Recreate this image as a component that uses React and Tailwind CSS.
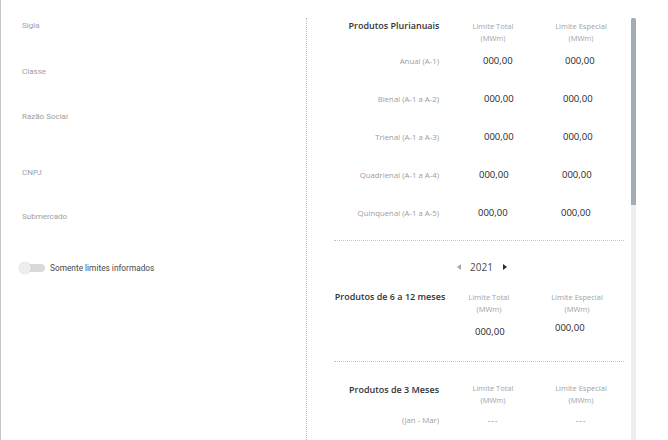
import React from "react";

const OS = "font-['Open_Sans',_'Noto_Sans',_sans-serif]";
const RB = "font-['Roboto',_'Liberation_Sans',_sans-serif]";

const rows = [
  { label: "Anual (A-1)", v1: "pl-[36px]", v2: "pl-[26px]" },
  { label: "Bienal (A-1 a A-2)", v1: "pl-[37px]", v2: "pl-[24px]" },
  { label: "Trienal (A-1 a A-3)", v1: "pl-[37px]", v2: "pl-[24px]" },
  { label: "Quadrienal (A-1 a A-4)", v1: "pl-[32px]", v2: "pl-[23px]" },
  { label: "Quinquenal (A-1 a A-5)", v1: "pl-[31px]", v2: "pl-[22px]" },
];

function Header({ title, titleClass = "" }) {
  return (
    <div className="flex h-[22px] items-start">
      <div className={`w-[113px] pl-[7px] flex justify-center ${titleClass}`}>
        <span className="whitespace-nowrap text-[9px] font-semibold leading-[12px] text-[#333333]">
          {title}
        </span>
      </div>
      <div className="w-[92px] flex flex-col items-center text-[7.5px] leading-[12px] text-[#a3a3a3]">
        <span>Limite Total</span>
        <span>(MWm)</span>
      </div>
      <div className="w-[84px] flex flex-col items-center text-[7.5px] leading-[12px] text-[#a3a3a3]">
        <span>Limite Especial</span>
        <span>(MWm)</span>
      </div>
    </div>
  );
}

export default function App() {
  return (
    <div className={`w-[668px] h-[440px] bg-white border-l border-[#c6c6c6] overflow-hidden`}>
      <div className="flex mt-[18px] h-[422px]">
        {/* Left column */}
        <div className={`w-[306px] shrink-0 border-r border-dotted border-[#b8b8b8] pl-[21px] pt-[2px] ${RB}`}>
          <div className="h-[46px] text-[8px] leading-[12px] text-[#a0a0a0]">Sigla</div>
          <div className="h-[45px] text-[8px] leading-[12px] text-[#a0a0a0]">Classe</div>
          <div className="h-[56px] text-[8px] leading-[12px] text-[#a0a0a0]">Razão Social</div>
          <div className="h-[44px] text-[8px] leading-[12px] text-[#a0a0a0]">CNPJ</div>
          <div className="h-[51px] text-[8px] leading-[12px] text-[#a0a0a0]">Submercado</div>
          <div className="flex items-center h-[12px] -ml-[3px]">
            <div className="relative w-[26px] h-[10px]">
              <div className="absolute left-[2px] right-0 top-[1px] h-[8px] rounded-full bg-[#dadada]" />
              <div className="absolute left-0 top-[-1px] w-[12px] h-[12px] rounded-full bg-[#eeeeee] shadow-[0_0_1px_rgba(0,0,0,0.25)]" />
            </div>
            <span className="ml-[5px] text-[8.3px] leading-[12px] font-normal text-[#4a4a4a]">
              Somente limites informados
            </span>
          </div>
        </div>

        {/* Right column */}
        <div className={`w-[324px] shrink-0 pl-[27px] pt-[2px] ${OS}`}>
          <Header title="Produtos Plurianuais" />
          {rows.map((r) => (
            <div key={r.label} className="flex items-center h-[38px]">
              <div className="w-[113px] pr-[8px] text-right text-[7.8px] leading-[12px] text-[#9d9d9d] whitespace-nowrap">
                {r.label}
              </div>
              <div className={`w-[92px] ${r.v1} text-[9.5px] leading-[14px] text-[#1f1f1f] font-medium`}>000,00</div>
              <div className={`w-[84px] ${r.v2} text-[9.5px] leading-[14px] text-[#1f1f1f] font-medium`}>000,00</div>
            </div>
          ))}
          <div className="mt-[8px] w-[290px] border-t border-dotted border-[#c4c4c4]" />

          <div className="mt-[20px] h-[12px] flex items-center pl-[123px]">
            <svg width="4" height="6" viewBox="0 0 4 6" className="mr-[9px]">
              <polygon points="4,0 4,6 0,3" fill="#a8a8a8" />
            </svg>
            <span className="text-[10px] leading-[12px] text-[#4a4a4a]">2021</span>
            <svg width="4" height="6" viewBox="0 0 4 6" className="ml-[10px]">
              <polygon points="0,0 0,6 4,3" fill="#2a2a2a" />
            </svg>
          </div>

          <div className="mt-[18px]">
            <Header title="Produtos de 6 a 12 meses" titleClass="-ml-[4px]" />
          </div>
          <div className="flex h-[46px] mt-[2px]">
            <div className="w-[113px]" />
            <div className="w-[92px] pl-[28px] pt-[10px] text-[9.5px] leading-[14px] text-[#1f1f1f] font-medium">000,00</div>
            <div className="w-[84px] pl-[16px] pt-[6px] text-[9.5px] leading-[14px] text-[#1f1f1f] font-medium">000,00</div>
          </div>
          <div className="w-[290px] border-t border-dotted border-[#c4c4c4]" />

          <div className="mt-[20px]">
            <Header title="Produtos de 3 Meses" titleClass="pt-[2px]" />
          </div>
          <div className="flex items-center h-[12px] mt-[10px]">
            <div className="w-[113px] pr-[8px] text-right text-[7.8px] leading-[12px] text-[#9d9d9d]">(Jan - Mar)</div>
            <div className="w-[92px] text-center text-[8px] leading-[12px] tracking-[1px] text-[#777777]">---</div>
            <div className="w-[84px] text-center text-[8px] leading-[12px] tracking-[1px] text-[#777777]">---</div>
          </div>
        </div>

        {/* Scrollbar */}
        <div className="w-[5px] shrink-0 bg-[#eceef0] h-full">
          <div className="h-[187px] bg-[#a3adb4] rounded-t-[2px]" />
        </div>
      </div>
    </div>
  );
}
